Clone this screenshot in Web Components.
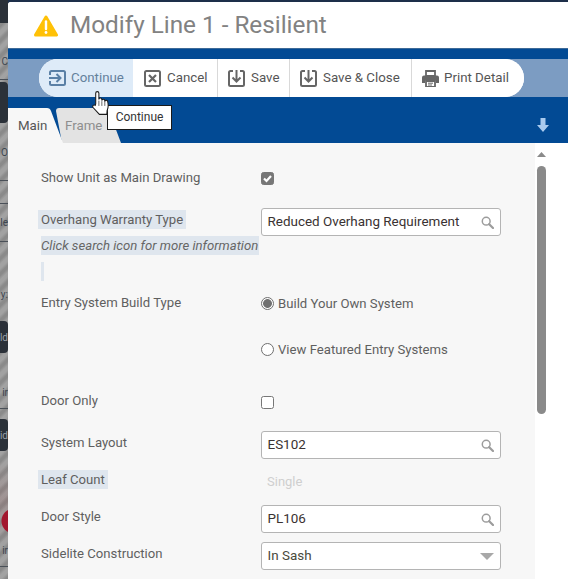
<!DOCTYPE html>
<html lang="en"><head><meta charset="utf-8"><title>Modify Line 1 - Resilient</title>
<style>
html,body{margin:0;padding:0;background:#1d2f4a;overflow:hidden}
body{width:568px;height:579px;font-family:Roboto,"Liberation Sans",sans-serif}
</style></head>
<body>
<x-app>
  <x-backdrop slot="side"></x-backdrop>
  <x-modal slot="main">
    <x-header>Modify Line 1 - Resilient</x-header>
    <x-blueband>
      <x-toolbar>
        <x-tool icon="continue" active w="95">Continue</x-tool>
        <x-tool icon="cancel" w="84">Cancel</x-tool>
        <x-tool icon="save" w="72">Save</x-tool>
        <x-tool icon="save" w="122">Save &amp; Close</x-tool>
        <x-tool icon="print" w="112" last>Print Detail</x-tool>
      </x-toolbar>
      <x-tabs></x-tabs>
    </x-blueband>
    <x-body>
      <x-field top="23" h="25" label="Show Unit as Main Drawing"><x-check checked></x-check></x-field>
      <x-field top="17" h="73" label="Overhang Warranty Type" mark note="Click search icon for more information"><x-lookup>Reduced Overhang Requirement</x-lookup></x-field>
      <x-field top="10" h="28" label="Entry System Build Type" plain><x-radio checked>Build Your Own System</x-radio></x-field>
      <x-field top="18" h="28" label=""><x-radio>View Featured Entry Systems</x-radio></x-field>
      <x-field top="25" h="28" label="Door Only" lift="1"><x-check></x-check></x-field>
      <x-field top="13" h="28" label="System Layout" plain><x-lookup>ES102</x-lookup></x-field>
      <x-field top="9" h="24" label="Leaf Count" mark><x-static>Single</x-static></x-field>
      <x-field top="13" h="28" label="Door Style" plain><x-lookup>PL106</x-lookup></x-field>
      <x-field top="9" h="28" label="Sidelite Construction" plain><x-select>In Sash</x-select></x-field>
    </x-body>
    <x-tooltip>Continue</x-tooltip>
    <x-pointer></x-pointer>
  </x-modal>
</x-app>
<script>
function def(name, css, html, init){
  customElements.define(name, class extends HTMLElement{
    constructor(){super();
      const r=this.attachShadow({mode:'open'});
      r.innerHTML='<style>'+css+'</style>'+(typeof html==='function'?html(this):html);
    }
    connectedCallback(){ if(init) init(this); }
  });
}
const ICONS={
 continue:'<path d="M1 5V2.500A1.500 1.500 0 0 1 2.500 1h12A1.500 1.500 0 0 1 16 2.500v11a1.500 1.500 0 0 1-1.500 1.500h-12A1.500 1.500 0 0 1 1 13.500V11" fill="none" stroke="currentColor" stroke-width="2"/><path d="M0 8h11M7.500 4l4 4-4 4" fill="none" stroke="currentColor" stroke-width="2"/>',
 cancel:'<rect x="1" y="1" width="15" height="15" rx="1.500" fill="none" stroke="currentColor" stroke-width="2"/><path d="M5 5l7 7M12 5l-7 7" stroke="currentColor" stroke-width="2.200" fill="none"/>',
 save:'<path d="M5 1H2.500A1.500 1.500 0 0 0 1 2.500v12A1.500 1.500 0 0 0 2.500 16h12a1.500 1.500 0 0 0 1.500-1.500v-12A1.500 1.500 0 0 0 14.500 1H12" fill="none" stroke="currentColor" stroke-width="2"/><path d="M8.500 0v11M4.500 7.500l4 4 4-4" fill="none" stroke="currentColor" stroke-width="2"/>',
 print:'<path d="M4 6V1h9v5z" fill="none" stroke="currentColor" stroke-width="1.800"/><path d="M2 5.500h13a2 2 0 0 1 2 2V13h-3v-2.500H3V13H0V7.500a2 2 0 0 1 2-2z" fill="currentColor"/><path d="M4 11h9v6H4z" fill="none" stroke="currentColor" stroke-width="1.800"/><path d="M6 13.200h5M6 15h4" stroke="currentColor"/>'
};
def('x-app',':host{display:flex;width:568px;height:579px;overflow:hidden}','<slot name="side"></slot><slot name="main"></slot>');
def('x-backdrop',`:host{display:flex;flex-direction:column;width:8px;height:579px;flex:none;overflow:hidden;
  background:linear-gradient(180deg,transparent 460px,rgba(150,90,90,.22) 500px,transparent 545px),repeating-linear-gradient(135deg,#a2a2a2 0,#a2a2a2 3px,#8a8a8a 6px,#8a8a8a 8px,#a2a2a2 11px);font:10px Roboto,sans-serif;color:#3d4650}
  div{display:flex;justify-content:flex-end;align-items:center;white-space:nowrap;flex:none}
  .d{background:#2b3139;color:#99a0a8;border-radius:0 4px 4px 0}.l{border-bottom:1px solid #4a5058}
  .c{width:8px;height:25px;background:radial-gradient(circle at 14px 12px,#a3182f 12px,transparent 13px);}`,
 `<div class="d" style="height:23px;border-radius:0"></div>
  <div style="height:56px" class="l"><span style="margin-top:20px">C</span></div>
  <div class="d" style="height:41px;margin-top:2px"></div>
  <div style="height:57px" class="l"><span style="margin-top:2px">O</span></div>
  <div style="height:22px" class="l"></div>
  <div style="height:37px" class="l"><span>le</span></div>
  <div style="height:58px;align-items:flex-end"><span>y:</span></div>
  <div class="d" style="height:32px;margin-top:21px">ld</div>
  <div style="height:55px" class="l"><span style="margin-top:24px">ir</span></div>
  <div class="d" style="height:32px;margin-top:10px">id</div>
  <div class="c" style="margin-top:58px"></div>
  <div style="height:32px" class="l"><span>ir</span></div>`);
def('x-modal',':host{display:flex;flex-direction:column;position:relative;width:560px;height:577px;margin-top:2px;background:#fff;border-radius:3px 0 0 0;overflow:hidden;flex:none}','<slot></slot>');
def('x-header',`:host{display:flex;align-items:center;gap:12px;height:46px;padding:0 0 0 26px;background:#fff;color:#828282;font:24.300px/1 Roboto,sans-serif;box-sizing:border-box;flex:none}
  svg{width:24px;height:22px;flex:none;margin-top:1px}`,
  `<svg viewBox="0 0 24 22"><path d="M12 2 L22.500 20H1.500z" fill="#ffc107" stroke="#ffc107" stroke-width="3" stroke-linejoin="round"/><path d="M12 6.500v7.500" stroke="#fff" stroke-width="2.400" stroke-linecap="round"/><circle cx="12" cy="17.500" r="1.400" fill="#fff"/></svg><span><slot></slot></span>`);
def('x-blueband',':host{display:flex;flex-direction:column;height:95px;background:#024a94;flex:none;padding-top:10px;box-sizing:border-box;border-top:1px solid #3e6a97}','<slot></slot>');
def('x-toolbar',`:host{display:block;height:38px;background:#7c9cc2;flex:none}
  .p{display:flex;height:38px;width:485px;margin-left:31px;background:#fff;border-radius:19px;overflow:hidden}`,'<div class="p"><slot></slot></div>');
def('x-tool',`:host{display:flex;align-items:center;height:38px;box-sizing:border-box;color:#555;font:13.300px/1 Roboto,sans-serif;border-right:1px solid #d9d9d9;flex:none;background:#fff}
  :host([active]){background:#deebf8;color:#64809c;border-right-color:#fff;padding-left:10px}
  :host([last]){border-right:0}
  span{margin-top:-1px}
  svg{width:17px;height:17px;flex:none;margin:0 6px 0 10px;color:#666}
  :host([active]) svg{color:#5a80a6;margin-left:0;margin-right:5px}
  :host([icon=print]) svg{margin-right:5px}`,
  h=>`<svg viewBox="0 0 17 17">${ICONS[h.getAttribute('icon')]}</svg><span><slot></slot></span>`,
  h=>{h.style.width=h.getAttribute('w')+'px'});
def('x-tabs',`:host{display:flex;height:35px;margin-top:11px;flex:none;justify-content:space-between}
  .t{display:flex;align-items:center;height:35px;box-sizing:border-box;font:13.300px/1 Roboto,sans-serif;flex:none}
  .m{width:55px;padding-left:10px;background:#f7f7f7;color:#555;position:relative;z-index:1;clip-path:path("M0 0H39Q42 0 43 3L55 35H0Z")}
  .f{width:65px;margin-left:-7px;padding-left:9px;background:#e3e3e3;color:#8e8e8e;clip-path:path("M0 3Q0 0 3 0H49Q52 0 53 3L65 35H6Z")}
  .g{display:flex}
  svg{width:12px;height:14px;margin:10px 19px 0 0}`,
  `<div class="g"><div class="t m">Main</div><div class="t f">Frame</div></div><svg viewBox="0 0 12 14"><path d="M3.500 0h5v7H12L6 14 0 7h3.500z" fill="#a9caee"/></svg>`);
def('x-body',`:host{display:flex;flex:1;min-height:0;background:#fff}
  .f{width:527px;background:#f7f7f7;display:flex;flex-direction:column;padding-left:33px;box-sizing:border-box;flex:none}
  .s{display:flex;flex-direction:column;margin-left:2px;width:9px;padding-top:9px;gap:9px}
  .s svg{width:9px;height:5px;display:block}.s i{display:block;width:9px;height:248px;background:#8a8a8a;border-radius:5px}`,
  `<div class="f"><slot></slot></div><div class="s"><svg viewBox="0 0 9 5"><path d="M4.500 0L9 5H0z" fill="#8a8a8a"/></svg><i></i></div>`);
def('x-field',`:host{display:grid;grid-template-columns:220px 240px;flex:none;color:#5f5f5f;font:13.150px/19px Roboto,sans-serif}
  .l{display:flex;flex-direction:column;align-items:flex-start}
  .t{display:inline-block;margin-top:2px}
  .mark{background:#dfe6ee;margin-left:-3px;padding:0 3px}
  .n{background:#dfe6ee;font-style:italic;margin-top:7px;white-space:nowrap;width:218px;color:#666}
  .e{background:#dfe6ee;width:3px;height:19px;margin-top:7px}
  .c{display:flex;align-items:flex-start;min-width:0}`,
  h=>{const l=h.getAttribute('label'),n=h.getAttribute('note'),m=h.hasAttribute('mark');
    return `<div class="l">${l?`<span class="t ${m?'mark':''}">${l}</span>`:''}${n?`<span class="n">${n}</span><span class="e"></span>`:''}</div><div class="c"><slot></slot></div>`},
  h=>{h.style.marginTop=h.getAttribute('top')+'px';h.style.height=h.getAttribute('h')+'px';
    if(h.hasAttribute('lift')){const t=h.shadowRoot.querySelector('.t');t.style.marginTop=(2-h.getAttribute('lift'))+'px';}});
const BOX=`:host{display:flex;align-items:center;width:240px;height:28px;box-sizing:border-box;background:#fff;border:1px solid #b4b4b4;border-radius:3px;padding:0 6px 0 5.500px;color:#3a3232;font:13.450px/1 Roboto,sans-serif;justify-content:space-between}span{margin-top:-1px}svg{flex:none}`;
def('x-lookup',BOX,`<span><slot></slot></span><svg width="13" height="13" viewBox="0 0 13 13"><circle cx="5.200" cy="5.200" r="3.900" fill="none" stroke="#9c9c9c" stroke-width="1.500"/><path d="M8.200 8.200L12 12" stroke="#9c9c9c" stroke-width="2.200" stroke-linecap="round"/></svg>`);
def('x-select',BOX+':host{color:#4a4a3c}',`<span><slot></slot></span><svg width="14" height="7" viewBox="0 0 14 7"><path d="M0 0h14L7 7z" fill="#a8a8a8"/></svg>`);
def('x-static',':host{display:block;color:#cfcfcf;font:13px/1 Roboto,sans-serif;padding:7px 0 0 6px}','<slot></slot>');
def('x-check',`:host{display:block;width:13px;height:13px;box-sizing:border-box;border:1px solid #777;border-radius:2.500px;background:#fff;margin-top:6px}
  :host([checked]){background:#777}svg{display:none;width:11px;height:11px}:host([checked]) svg{display:block}`,
  `<svg viewBox="0 0 11 11"><path d="M2 5.500l2.500 2.500L9 3" fill="none" stroke="#fff" stroke-width="2.200"/></svg>`);
def('x-radio',`:host{display:flex;align-items:center;gap:4px;color:#5f5f5f;font:13.150px/1 Roboto,sans-serif;height:19px;margin-top:3px}
  i{display:block;width:13px;height:13px;box-sizing:border-box;border:1px solid #6f6f6f;border-radius:50%;background:#fff;flex:none}
  :host([checked]) i{background:radial-gradient(circle,#707070 0 4px,#fff 4.800px)}`,
  `<i></i><span><slot></slot></span>`);
def('x-tooltip',`:host{position:absolute;left:99px;top:103px;width:65px;height:25px;box-sizing:border-box;background:#fff;border:1px solid #1a1a1a;color:#333;font:12px/23px Roboto,sans-serif;text-align:center;z-index:5}`,'<slot></slot>');
def('x-pointer',`:host{position:absolute;left:84px;top:89px;width:18px;height:24px;z-index:6}svg{display:block}`,
 `<svg width="18" height="24" viewBox="0 0 17 22.500"><path d="M3.500 12V2a1.500 1.500 0 0 1 3 0V8a1.400 1.400 0 0 1 2.800 0V9a1.400 1.400 0 0 1 2.800.2V10a1.400 1.400 0 0 1 2.800.3c.6 3 .4 6-.6 8L14 22H7L1 15.500c-1-1.500.5-3 2-2z" fill="#fff" stroke="#1c1c1c" stroke-width="1"/><path d="M6.500 9v5M9.300 9.500V14M12.100 10v4" stroke="#333" stroke-width=".7"/></svg>`);
</script>
</body></html>
